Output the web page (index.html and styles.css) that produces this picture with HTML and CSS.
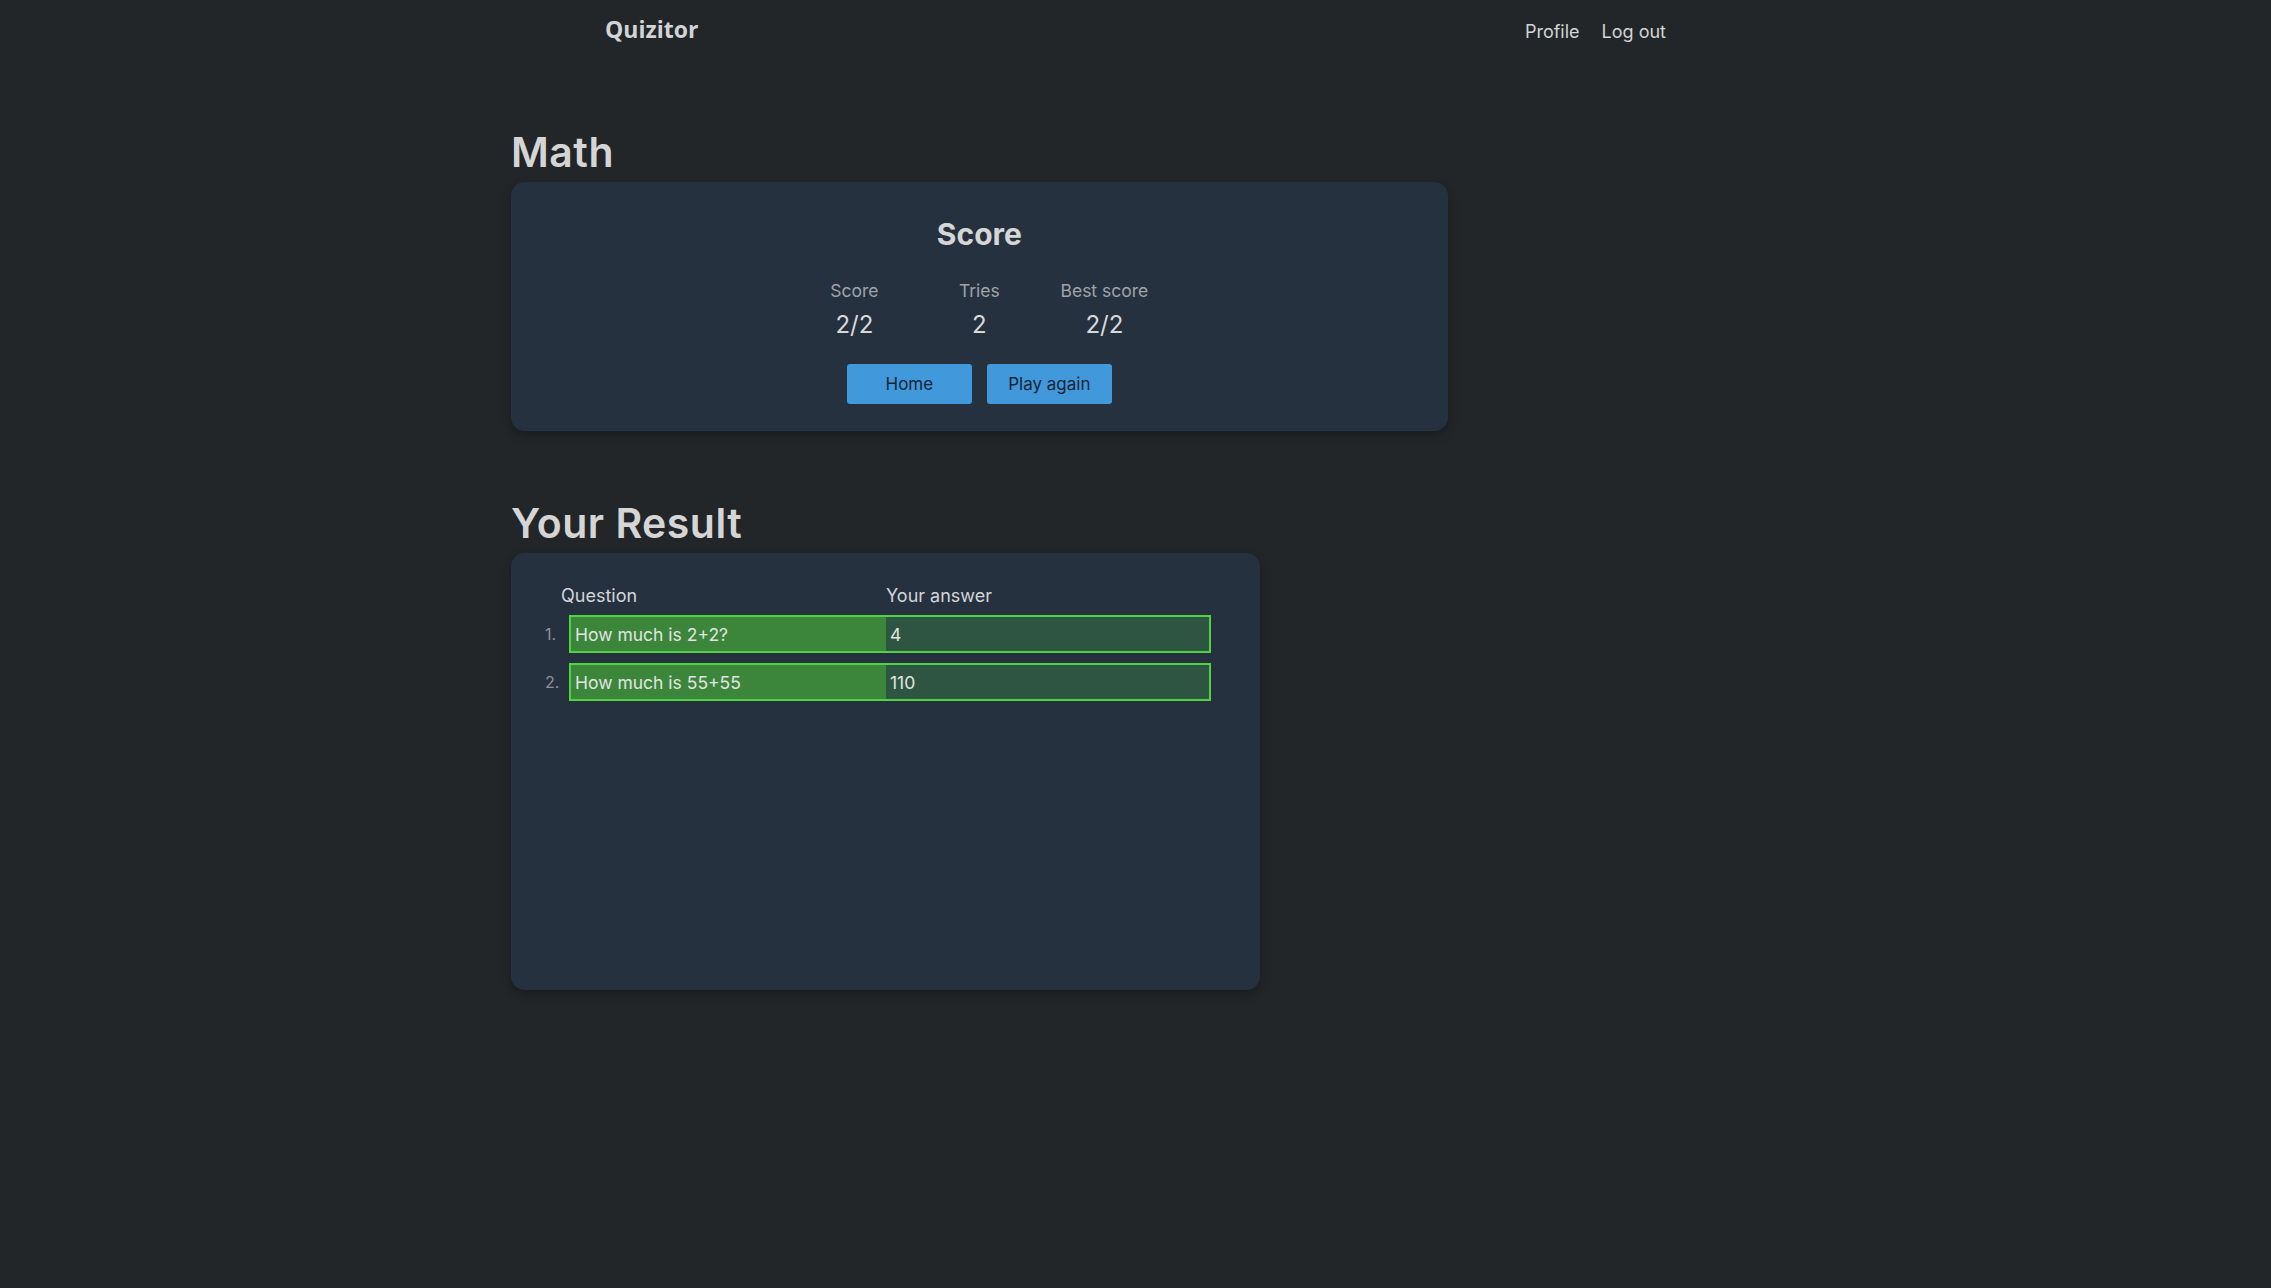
FILE: index.html
```html
<!DOCTYPE html>
<html lang="en">
<head>
<meta charset="utf-8">
<title>Quizitor</title>
<link rel="stylesheet" href="styles.css">
</head>
<body>
<header class="topbar">
  <div class="brand">Quizitor</div>
  <nav class="nav">
    <a class="nav-link" href="#">Profile</a>
    <a class="nav-link" href="#">Log out</a>
  </nav>
</header>
<main class="main">
  <h1 class="section-title">Math</h1>
  <section class="card score-card">
    <h2 class="card-title">Score</h2>
    <div class="stats">
      <div class="stat"><div class="stat-label">Score</div><div class="stat-value">2/2</div></div>
      <div class="stat"><div class="stat-label">Tries</div><div class="stat-value">2</div></div>
      <div class="stat"><div class="stat-label">Best score</div><div class="stat-value">2/2</div></div>
    </div>
    <div class="actions">
      <button class="btn">Home</button>
      <button class="btn">Play again</button>
    </div>
  </section>

  <h1 class="section-title result-title">Your Result</h1>
  <section class="card result-card">
    <div class="result-head">
      <div class="head-q">Question</div>
      <div class="head-a">Your answer</div>
    </div>
    <ol class="result-list">
      <li class="result-item">
        <span class="num">1.</span>
        <div class="result-row">
          <div class="cell-q">How much is 2+2?</div>
          <div class="cell-a">4</div>
        </div>
      </li>
      <li class="result-item">
        <span class="num">2.</span>
        <div class="result-row">
          <div class="cell-q">How much is 55+55</div>
          <div class="cell-a">110</div>
        </div>
      </li>
    </ol>
  </section>
</main>
</body>
</html>
```
FILE: styles.css
```css
* { box-sizing: border-box; }
html, body { margin: 0; padding: 0; }
body {
  background: #222629;
  color: #d6d7d8;
  font-family: Inter, "Noto Sans", sans-serif;
  min-height: 1288px;
}
.topbar {
  width: 1061px;
  margin: 0 auto;
  display: flex;
  justify-content: space-between;
  align-items: flex-start;
  height: 56px;
}
.brand {
  font-family: "Open Sans", sans-serif;
  font-weight: 700;
  font-size: 23px;
  line-height: 28px;
  color: #d3d4d5;
  padding-top: 15px;
}
.nav { display: flex; gap: 22px; padding-top: 21px; }
.nav-link {
  color: #d3d4d5;
  text-decoration: none;
  font-size: 18px;
  line-height: 22px;
}
.main {
  width: 1249px;
  margin: 0 auto;
}
.section-title {
  margin: 0;
  font-size: 41px;
  font-weight: 600;
  line-height: 48px;
  color: #d5d5d5;
  padding-top: 72px;
  padding-bottom: 6px;
  letter-spacing: 0.5px;
}
.result-title { padding-top: 68px; }
.card {
  background: #263140;
  border-radius: 14px;
  box-shadow: 0 4px 10px rgba(0,0,0,0.25);
}
.score-card {
  width: 75%;
  height: 249px;
  display: flex;
  flex-direction: column;
  align-items: center;
  padding-top: 34px;
}
.card-title {
  margin: 0;
  font-size: 30px;
  font-weight: 700;
  line-height: 36px;
  color: #d5d6d7;
}
.stats {
  display: flex;
  margin-top: 28px;
}
.stat {
  width: 125px;
  text-align: center;
}
.stat-label {
  font-size: 17.5px;
  line-height: 22px;
  color: #9ea3a8;
}
.stat-value {
  font-size: 24px;
  line-height: 30px;
  color: #d8d9da;
  margin-top: 8px;
}
.actions {
  display: flex;
  gap: 15px;
  margin-top: 24px;
}
.btn {
  width: 125px;
  height: 40px;
  border: none;
  border-radius: 3px;
  background: #4198db;
  color: #182535;
  font-family: Inter, "Noto Sans", sans-serif;
  font-size: 17px;
  padding: 0;
}
.result-card {
  width: 60%;
  height: 437px;
  padding-top: 31px;
}
.result-head {
  display: flex;
  padding-left: 50px;
  font-size: 18px;
  line-height: 24px;
  color: #d3d6d9;
}
.head-q { width: 325px; }
.result-list {
  list-style: none;
  margin: 7px 0 0 0;
  padding: 0;
  display: flex;
  flex-direction: column;
  gap: 10px;
}
.result-item {
  display: flex;
  align-items: center;
  padding-left: 34px;
}
.num {
  width: 24px;
  font-size: 16px;
  color: #8d9297;
}
.result-row {
  display: flex;
  width: 642px;
  height: 38px;
  border: 2px solid #4fd343;
  font-size: 17.5px;
  color: #e2e4e2;
}
.cell-q {
  width: 315px;
  background: #3c863c;
  display: flex;
  align-items: center;
  padding-left: 4px;
}
.cell-a {
  flex: 1;
  background: #2d5541;
  display: flex;
  align-items: center;
  padding-left: 4px;
}
```
